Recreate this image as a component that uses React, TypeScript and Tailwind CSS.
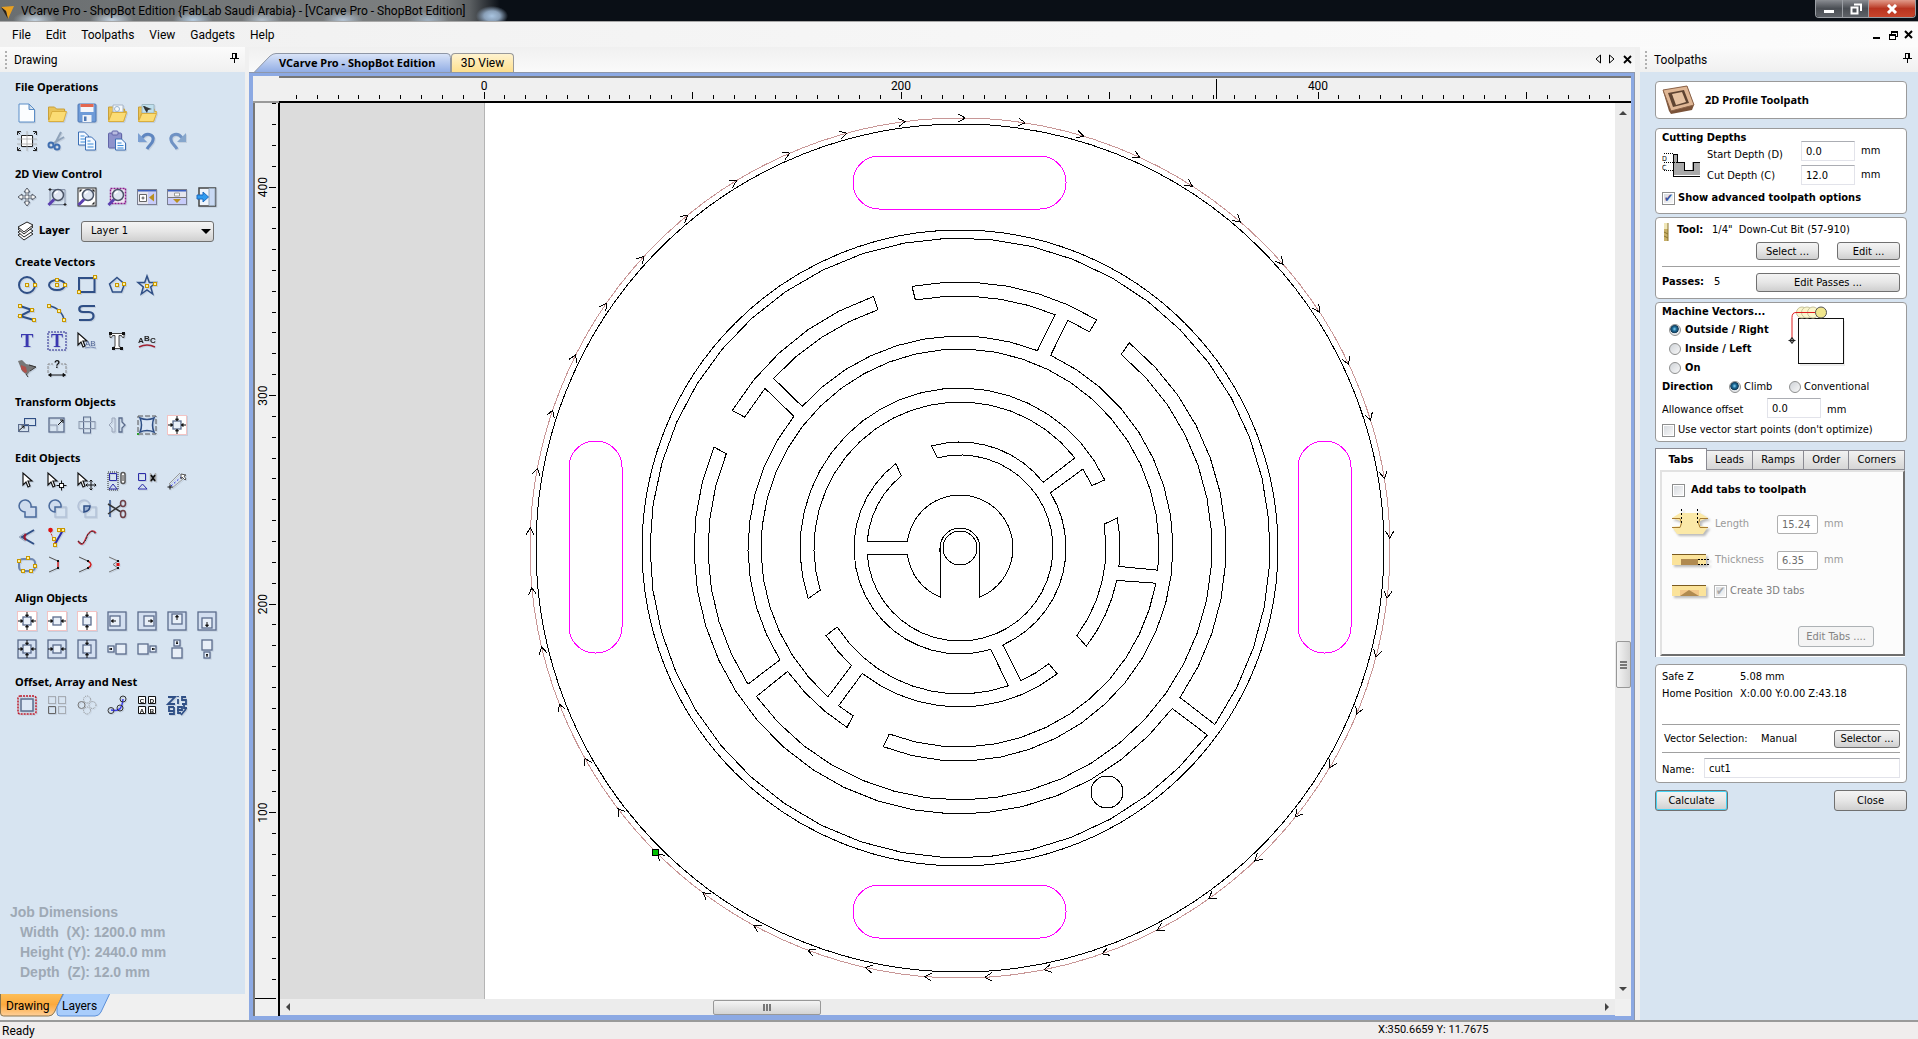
import type { ReactNode } from "react";

const menu = ["File", "Edit", "Toolpaths", "View", "Gadgets", "Help"];

const NAVY = "#2f4f86";
const STEEL = "#5b6c8c";

/* ---------- toolbox icons, all on a 20x20 grid ---------- */

const node = (x: number, y: number) => (
  <rect key={`${x}-${y}`} x={x - 1.5} y={y - 1.5} width="3" height="3" fill="#fff2a0" stroke="#c99700" strokeWidth="1" />
);

const folder = (
  <>
    <path d="M1.500 17V4h6l2 2h8v3" fill="#e9c45a" stroke="#c9a03a" />
    <path d="M1.500 18.500 5 8.500h14.500l-3 10z" fill="#fbdc74" stroke="#d9ae3e" />
  </>
);

const magnifier = (
  <>
    <circle cx="11" cy="8" r="5.500" fill="#dfe6f2" stroke="#4b5568" strokeWidth="1.500" />
    <path d="M8 7a3.500 3.500 0 0 1 3-2.500" stroke="#fff" strokeWidth="1.500" fill="none" />
    <path d="M7 12.500 1.500 18" stroke="#5a3fb0" strokeWidth="3" />
  </>
);

const cursor = (x: number) => (
  <path d={`M${x} 2v12l3-3 2 5 2-1-2-5h4z`} fill="#fff" stroke="#111" strokeWidth="1.200" />
);

const frame = <rect x="1" y="1" width="18" height="18" fill="#d3dff0" stroke={STEEL} strokeWidth="1.300" />;
const pinkFrame = <rect x=".5" y=".5" width="19" height="19" fill="#fff" stroke="#f3c4c4" />;
const box = (x: number, y: number, s = 8) => (
  <rect x={x} y={y} width={s} height={s} fill="#e8eff8" stroke={STEEL} strokeWidth="1.300" />
);
const horizArrows = <path d="M1 10h5M4 8.500v3L5.500 10zM19 10h-5M16 8.500v3L14.500 10z" stroke="#111" fill="#111" />;
const vertArrows = <path d="M10 1v5M8.500 4h3L10 5.500zM10 19v-5M8.500 16h3L10 14.500z" stroke="#111" fill="#111" />;

const icons: Record<string, ReactNode> = {
  "New file": <path d="M2 1h10l5.500 5.500V19H2zM12 1v5.500h5.500" fill="#fbfdff" stroke="#5b8ec8" />,
  "Open file": folder,
  "Save file": (
    <>
      <rect x="1" y="1" width="18" height="18" rx="1" fill="#6e9bd8" stroke="#4f78b4" />
      <path d="M3.500 1h13v8h-13z" fill="#f4f6fa" />
      <path d="M3.500 1h13v3h-13z" fill="#e4674f" />
      <path d="M5.500 12h9v7h-9z" fill="#eef2f8" />
      <path d="M7 13.500h2.500V18H7z" fill="#4f78b4" />
    </>
  ),
  "Import vectors": (
    <>
      {folder}
      <path d="M6 2h10v7H6z" fill="#f4f8fc" stroke="#a8b6c8" />
      <circle cx="10" cy="6" r="2.500" fill="none" stroke="#9ab4cf" />
      <path d="M1.500 18.500 5 9.500h14.500l-3 9z" fill="#fbdc74" stroke="#d9ae3e" />
    </>
  ),
  "Import bitmap": (
    <>
      {folder}
      <path d="M5 1.500h12V10H5z" fill="#bfe0ee" stroke="#9fb8c4" />
      <path d="M6 3c3 0 4 2 9 3l-4 1-1 3-2-3z" fill="#333" />
      <path d="M1.500 18.500 5 10.500h14.500l-3 8z" fill="#fbdc74" stroke="#d9ae3e" />
    </>
  ),
  "Job setup": (
    <>
      <path d="M4.500 4.500h11v11h-11z" fill="#fff" stroke="#222" />
      <path d="M0 8h20M0 13h20M10 0v20" stroke="#a8a8a8" strokeWidth=".8" />
      <path d="M.5 4V.5H4M.5.5 3 3M16 .5h3.500V4M19.500.5 17 3M.5 16v3.500H4M.5 19.500 3 17M16 19.500h3.500V16M19.500 19.500 17 17" fill="none" stroke="#222" />
    </>
  ),
  Cut: (
    <>
      <path d="M14 1 8 12.500M17 6 5 13" stroke="#8fa3ba" strokeWidth="2" />
      <circle cx="4" cy="14" r="2.500" fill="none" stroke="#3f6eb0" strokeWidth="2" />
      <circle cx="10" cy="16" r="2.500" fill="none" stroke="#3f6eb0" strokeWidth="2" />
    </>
  ),
  Copy: (
    <>
      <path d="M1.500 1h6l4 4v9h-10z" fill="#f4f9ff" stroke="#3b6fb5" />
      <path d="M3.500 5h4M3.500 8h6M3.500 11h6" stroke="#3b8ad8" />
      <path d="M8.500 6h6l4 4v9h-10z" fill="#f4f9ff" stroke="#3b6fb5" />
      <path d="M10.500 10h3M10.500 13h6M10.500 16h6" stroke="#3b8ad8" />
    </>
  ),
  Paste: (
    <>
      <rect x="1.500" y="2" width="13" height="15" rx="1" fill="#8e93cc" stroke="#6266a8" />
      <rect x="5" y="0" width="6" height="4" rx="1" fill="#b9bce0" stroke="#6266a8" />
      <path d="M8.500 8h6l4 4v7h-10z" fill="#f4f9ff" stroke="#3b6fb5" />
      <path d="M10.500 12h4M10.500 14.500h6M10.500 17h6" stroke="#3b8ad8" />
    </>
  ),
  Undo: (
    <>
      <path d="M5 7C9 1 17 3 16 9c-.5 4-4 5-6 9" fill="none" stroke="#5f86c0" strokeWidth="3" />
      <path d="M1 2v9h9z" fill="#7b9fd2" />
    </>
  ),
  Redo: (
    <>
      <path d="M15 7C11 1 3 3 4 9c.5 4 4 5 6 9" fill="none" stroke="#6f92c4" strokeWidth="3" />
      <path d="M19 2v9h-9z" fill="#86a6cc" />
    </>
  ),
  Pan: (
    <path
      d="M10 1l3 4h-2v4h4V7l4 3-4 3v-2h-4v4h2l-3 4-3-4h2v-4H5v2l-4-3 4-3v2h4V5H7z"
      fill="#f4f4f4"
      stroke="#555c68"
    />
  ),
  "Zoom window": (
    <>
      <path d="M3 2.500h15v15H3z" fill="none" stroke="#8a97ad" />
      <path d="M3 1v3M1.500 2.500h3M18 16v3M16.500 17.500h3" stroke="#222" />
      {magnifier}
    </>
  ),
  "Zoom to fit": (
    <>
      <rect x="1" y="1" width="18" height="18" fill="#fff" stroke="#222" />
      <path d="M2.500 2.500h3l-3 3zM17.500 2.500v3l-3-3zM17.500 17.500h-3l3-3z" fill="#222" />
      {magnifier}
    </>
  ),
  "Zoom selected": (
    <>
      <rect x="3.500" y="1.500" width="15" height="15" fill="#f0e6f5" stroke="#8b1a8b" strokeWidth="1.500" strokeDasharray="2 1" />
      {magnifier}
    </>
  ),
  "Tile side by side": (
    <>
      <rect x=".5" y="2.500" width="19" height="15" fill="#e6e6ee" stroke="#7a7f90" />
      <path d="M1 3h18v1.500H1z" fill="#3a5fc0" />
      <path d="M11 5h8v12h-8z" fill="#c8ccfa" />
      <path d="M2.500 7.500h7v7h-7z" fill="#fff" stroke="#666" />
      <path d="M4.500 11h3M6 9.500v3" stroke="#555" />
      <path d="M12 10.500l5-4v8z" fill="#b89020" />
    </>
  ),
  "Tile stacked": (
    <>
      <rect x=".5" y="2.500" width="19" height="15" fill="#e6e6ee" stroke="#7a7f90" />
      <path d="M1 3h18v1.500H1z" fill="#3a5fc0" />
      <path d="M1 11h18v6H1z" fill="#c8ccfa" />
      <path d="M1 10.500h18" stroke="#777" />
      <path d="M7.500 6h5v3h-5z" fill="#fff" stroke="#999" />
      <path d="M6 12h8l-4 4z" fill="#b89020" />
    </>
  ),
  "Switch to toolpaths": (
    <>
      <rect x="2" y="1" width="16.500" height="18" fill="#eef4fc" stroke="#444" strokeWidth="1.500" />
      <path d="M12 1.500h6v17h-6z" fill="#c9d9f4" stroke="#9ab" />
      <path d="M0 8h6V5l5.500 5L6 15v-3H0z" fill="#2f9bf0" stroke="#1c6bc0" />
    </>
  ),
  Circle: (
    <>
      <circle cx="10" cy="10" r="8" fill="none" stroke={NAVY} strokeWidth="2" />
      {node(10, 10)}
      {node(18, 10)}
    </>
  ),
  Ellipse: (
    <>
      <ellipse cx="10" cy="10" rx="8" ry="5" fill="none" stroke={NAVY} strokeWidth="2" />
      {node(10, 10)}
      {node(18, 10)}
      {node(10, 5)}
    </>
  ),
  Rectangle: (
    <>
      <rect x="2" y="3" width="15.500" height="14" fill="none" stroke={NAVY} strokeWidth="2" />
      {node(18, 2)}
      {node(2, 17)}
    </>
  ),
  Polygon: (
    <>
      <path d="M10 2.500 17.500 9l-3 8h-9l-3-8z" fill="none" stroke={NAVY} strokeWidth="1.500" />
      {node(10, 10)}
      {node(17, 9)}
    </>
  ),
  Star: (
    <>
      <path d="m10 1 2.300 6.500H19L13.700 12l2 7-5.700-4-5.700 4 2-7L1 7.500h6.700z" fill="none" stroke={NAVY} strokeWidth="1.500" />
      {node(10, 11)}
      {node(18, 9)}
    </>
  ),
  Polyline: (
    <>
      <path d="M3 3l12 4L3 13l14 4" fill="none" stroke={NAVY} strokeWidth="2" />
      {node(3, 3)}
      {node(15, 7)}
      {node(3, 13)}
      {node(17, 17)}
    </>
  ),
  Arc: (
    <>
      <path d="M2 3c8 1 14 7 15 14" fill="none" stroke={NAVY} strokeWidth="1.500" />
      {node(2, 3)}
      {node(12, 8)}
      {node(17, 17)}
    </>
  ),
  Curve: <path d="M18 3H6c-5 0-5 6 0 6h6c6 0 6 8 0 8H2" fill="none" stroke={NAVY} strokeWidth="2.200" />,
  Text: (
    <text x="10" y="16" textAnchor="middle" fontFamily="Liberation Serif, serif" fontWeight="bold" fontSize="19" fill="#3a38b0">
      T
    </text>
  ),
  "Text in box": (
    <>
      <rect x="1" y="1" width="18" height="18" fill="none" stroke="#23238a" strokeDasharray="2 1" />
      <text x="10" y="16" textAnchor="middle" fontFamily="Liberation Serif, serif" fontWeight="bold" fontSize="18" fill="#3a38b0">
        T
      </text>
    </>
  ),
  "Edit text": (
    <>
      {cursor(1)}
      <text x="8" y="15" fontFamily="Liberation Sans, sans-serif" fontSize="8" fill="#4a5f90">
        AB
      </text>
      <path d="M8 17q6-2 11 0" fill="none" stroke="#7c8fb8" />
    </>
  ),
  "Convert text": (
    <>
      <path d="M3 2.500h14v4h-1.500l-1-2H12v11l2 1v1H6v-1l2-1v-11H5.500l-1 2H3z" fill="#fff" stroke="#444" />
      <path d="M2 1h3v3H2zM15 1h3v3h-3zM5 16h3v3H5zM13 16h3v3h-3z" fill="#111" />
    </>
  ),
  "Text on curve": (
    <>
      <text x="1" y="12" fontFamily="Liberation Sans, sans-serif" fontWeight="bold" fontSize="8" fill="#222">
        A
      </text>
      <text x="7" y="10" fontFamily="Liberation Sans, sans-serif" fontWeight="bold" fontSize="8" fill="#222">
        B
      </text>
      <text x="13" y="12" fontFamily="Liberation Sans, sans-serif" fontWeight="bold" fontSize="8" fill="#222">
        C
      </text>
      <path d="M2 16q8-4 16 0" fill="none" stroke="#a02030" strokeWidth="1.500" />
    </>
  ),
  "Trace bitmap": (
    <>
      <path d="M1 2l4-1 4 4 5 1 5 2-5 3-4 5-5-4z" fill="#777" />
      <path d="M4 6l5 2 1 5-2 1-4-4z" fill="#b0504a" />
      <path d="M12 6l7 2-6 4M9 15l2 3" stroke="#333" fill="none" />
    </>
  ),
  Measure: (
    <>
      <path d="M1 14V5h5M19 14V5h-5" fill="none" stroke="#8a8a8a" strokeDasharray="3 1" />
      <path d="M2 16h16M1.500 16 4 14.500v3zM18.500 16 16 14.500v3z" stroke="#111" fill="#111" />
      <text x="10" y="9" textAnchor="middle" fontFamily="Liberation Sans, sans-serif" fontWeight="bold" fontSize="10" fill="#111">
        ?
      </text>
    </>
  ),
  Move: (
    <>
      <rect x="7.500" y="3.500" width="11" height="7" fill="none" stroke={NAVY} />
      <rect x="1.500" y="9.500" width="10" height="7" fill="none" stroke={STEEL} />
      <path d="M2 15.500 7 11M7 11v2.500M7 11H4.500" stroke="#111" fill="none" />
    </>
  ),
  Scale: (
    <>
      <rect x="2" y="3" width="15" height="14" fill="none" stroke={STEEL} strokeWidth="1.300" />
      <path d="M2 10h8v7" fill="none" stroke="#8a97ad" />
      <path d="M11 10l5-5M16 5v3M16 5h-3" stroke="#111" />
    </>
  ),
  Rotate: (
    <>
      <rect x="6.500" y="2" width="7" height="16" fill="none" stroke={STEEL} />
      <rect x="2" y="6.500" width="16" height="7" fill="none" stroke="#8a97ad" />
    </>
  ),
  Mirror: (
    <>
      <path d="M8 3v14H5v-4L2 10l3-3V3z" fill="none" stroke="#9aa5b8" />
      <path d="M12 3v14h3v-4l3-3-3-3V3z" fill="none" stroke={STEEL} strokeWidth="1.300" />
    </>
  ),
  Distort: (
    <>
      <path d="M1 1h18v18H1z" fill="none" stroke="#555" strokeDasharray="5 2" />
      <path d="M3 3q7 3 14 0-3 7 0 14-7-3-14 0 3-7 0-14z" fill="#dbe6f5" stroke={NAVY} strokeWidth="1.500" />
      <path d="M0 18h2v2H0z" fill="#2ca02c" />
    </>
  ),
  "Align in material": (
    <>
      {pinkFrame}
      {box(6, 6)}
      {horizArrows}
      {vertArrows}
    </>
  ),
  Select: cursor(6),
  "Node edit": (
    <>
      {cursor(1)}
      <path d="M14.500 9.500v10M9.500 14.500h10" stroke="#111" />
      <rect x="12.500" y="12.500" width="4" height="4" fill="#fff" stroke="#111" />
    </>
  ),
  "Transform mode": (
    <>
      {cursor(1)}
      <path d="M14 9v10M9 14h10M12.500 10.500 14 9l1.500 1.500M12.500 17.500 14 19l1.500-1.500M10.500 12.500 9 14l1.500 1.500M17.500 12.500 19 14l-1.500 1.500" stroke="#111" fill="none" />
    </>
  ),
  Group: (
    <>
      <path d="M1 1h10v18H1z" fill="none" stroke="#222" strokeDasharray="1 1" />
      <path d="M2.500 2.500h7v7h-7zM2 18l4-5 4 5z" fill="none" stroke="#2c2ca8" />
      <rect x="14" y="1.500" width="4" height="11" rx="2" fill="#fff" stroke="#555" strokeWidth="1.500" />
      <path d="M16 4v6" stroke="#333" />
    </>
  ),
  Ungroup: (
    <>
      <path d="M1.500 2.500h7v7h-7zM1 18l4.500-5 4.500 5z" fill="none" stroke="#2c2ca8" />
      <path d="M13.500 2v9M18.500 2v9" stroke="#aaa" strokeWidth="1.500" />
      <path d="M14 4l4 6M18 4l-4 6" stroke="#111" strokeWidth="1.800" />
    </>
  ),
  Dimension: (
    <>
      <path d="M2 13 13 2M5 17 16 8" stroke="#999" />
      <path d="M4 15 14 6" stroke="#2c2ce0" strokeDasharray="2 2" />
      <path d="M14 3l5 1-2 1 2 3-1 1-3-3-1 2z" fill="#fff" stroke="#555" />
      <path d="M3 13.500v5M.5 16h5" stroke="#111" />
    </>
  ),
  Weld: <path d="M8 13a6 6 0 1 1 6-5h5v10H8z" fill="#cfdcee" stroke="#4a6a9c" strokeWidth="1.500" />,
  Subtract: (
    <>
      <path d="M8 8h11v10H8z" fill="none" stroke="#b4c2d8" strokeWidth="1.500" />
      <path d="M8 13a6 6 0 1 1 6-5H8z" fill="#cfdcee" stroke="#4a6a9c" strokeWidth="1.500" />
    </>
  ),
  Overlap: (
    <>
      <circle cx="7" cy="7" r="6" fill="none" stroke="#b4c2d8" strokeWidth="1.500" />
      <path d="M8 8h11v10H8z" fill="none" stroke="#b4c2d8" strokeWidth="1.500" />
      <path d="M7 7h6q0 5-6 6z" fill="#9fb4d4" stroke={NAVY} strokeWidth="1.500" />
    </>
  ),
  Trim: (
    <>
      <path d="M3 1v17" stroke={NAVY} strokeWidth="1.500" />
      <path d="M1 5l13 8M1 15l13-9" stroke="#333" strokeWidth="1.500" />
      <ellipse cx="16" cy="4.500" rx="2.500" ry="3" fill="none" stroke="#6d3f46" strokeWidth="1.500" />
      <ellipse cx="16" cy="15" rx="2.500" ry="3.500" fill="none" stroke="#6d3f46" strokeWidth="1.500" />
    </>
  ),
  Fillet: (
    <>
      <path d="M17 3 5 10l12 7" fill="none" stroke={NAVY} strokeWidth="2" />
      <path d="M9 7q-3 3 0 6" fill="none" stroke="#a0182c" strokeWidth="2" />
      <path d="M8 6 2 10l6 4" fill="none" stroke="#9aa5b8" />
    </>
  ),
  "Insert node": (
    <>
      <path d="M8 17 16 3" stroke="#2c2ca8" strokeWidth="2" />
      <path d="M3 4l5 12" stroke="#c33" strokeDasharray="2 1" />
      <circle cx="3.500" cy="3" r="2.300" fill="#e01010" />
      {node(12, 3)}
      {node(16, 3)}
      {node(7, 12)}
      {node(8, 18)}
    </>
  ),
  "Fit curves": (
    <>
      <path d="M1 14c4 6 6 2 8-3s6-10 10-5" fill="none" stroke="#c2283a" strokeWidth="1.500" />
      <path d="M1 14l4 3 4-4 2-6 4-3 4 3" fill="none" stroke="#333" strokeDasharray="2 1" />
    </>
  ),
  "Node smoothing": (
    <>
      <rect x="2" y="4" width="16" height="12" rx="4" fill="none" stroke="#6f87b0" strokeWidth="2" />
      {node(2, 6)}
      {node(11, 3)}
      {node(18, 11)}
      {node(6, 16)}
      {node(14, 16)}
    </>
  ),
  "Join with line": (
    <>
      <path d="M2 2l9 4M2 17l9-4" stroke="#555" />
      <path d="M11 6v7" stroke="#d02020" strokeWidth="1.500" />
      <path d="M10 5h2v2h-2zM10 12h2v2h-2z" fill="#111" />
    </>
  ),
  "Join with curve": (
    <>
      <path d="M2 2l9 4M2 17l9-4" stroke="#555" />
      <path d="M11 6q6 3.500 0 7" stroke="#d02020" strokeWidth="1.500" fill="none" />
      <path d="M10 5h2v2h-2zM10 12h2v2h-2z" fill="#111" />
    </>
  ),
  "Close by moving": (
    <>
      <path d="M2 2l9 4-5 3.500L11 13l-9 4" stroke="#777" fill="none" />
      <path d="M10 5h2v2h-2zM10 12h2v2h-2z" fill="#111" />
      <path d="M9.500 8h3v3h-3z" fill="#e01010" />
    </>
  ),
  "Align center material": (
    <>
      {pinkFrame}
      {box(6, 6)}
      {horizArrows}
      {vertArrows}
    </>
  ),
  "Align horizontal material": (
    <>
      {pinkFrame}
      {box(6, 6)}
      {horizArrows}
    </>
  ),
  "Align vertical material": (
    <>
      {pinkFrame}
      {box(6, 6)}
      {vertArrows}
    </>
  ),
  "Align left inside": (
    <>
      {frame}
      {box(3, 5, 10)}
      <path d="M4 10h5M6 8.500v3L4.500 10z" stroke="#111" fill="#111" />
    </>
  ),
  "Align right inside": (
    <>
      {frame}
      {box(7, 5, 10)}
      <path d="M16 10h-5M14 8.500v3l1.500-1.500z" stroke="#111" fill="#111" />
    </>
  ),
  "Align top inside": (
    <>
      {frame}
      {box(5, 3, 10)}
      <path d="M10 4v5M8.500 6h3L10 4.500z" stroke="#111" fill="#111" />
    </>
  ),
  "Align bottom inside": (
    <>
      {frame}
      {box(5, 7, 10)}
      <path d="M10 16v-5M8.500 14h3L10 15.500z" stroke="#111" fill="#111" />
    </>
  ),
  "Align center": (
    <>
      {frame}
      {box(6, 6)}
      {horizArrows}
      {vertArrows}
    </>
  ),
  "Align horizontal": (
    <>
      {frame}
      {box(6, 6)}
      {horizArrows}
    </>
  ),
  "Align vertical": (
    <>
      {frame}
      {box(6, 6)}
      {vertArrows}
    </>
  ),
  "Align left outside": (
    <>
      {box(1, 7, 6)}
      {box(9, 5, 10)}
      <path d="M2 10h3M4 9v2l1-1z" stroke="#111" fill="#111" />
    </>
  ),
  "Align right outside": (
    <>
      {box(13, 7, 6)}
      {box(1, 5, 10)}
      <path d="M18 10h-3M16 9v2l-1-1z" stroke="#111" fill="#111" />
    </>
  ),
  "Align above outside": (
    <>
      {box(7, 1, 6)}
      {box(5, 9, 10)}
      <path d="M10 2v3M9 4h2l-1 1z" stroke="#111" fill="#111" />
    </>
  ),
  "Align below outside": (
    <>
      {box(7, 13, 6)}
      {box(5, 1, 10)}
      <path d="M10 18v-3M9 16h2l-1-1z" stroke="#111" fill="#111" />
    </>
  ),
  Offset: (
    <>
      <rect x="1" y="1" width="18" height="18" rx="2" fill="none" stroke="#c01828" strokeWidth="1.500" strokeDasharray="2 1" />
      <rect x="4" y="4" width="12" height="12" fill="#dde7f5" stroke={STEEL} strokeWidth="1.500" />
    </>
  ),
  "Array copy": (
    <>
      <path d="M1.500 1.500h7v7h-7zM11.500 1.500h7v7h-7zM11.500 11.500h7v7h-7z" fill="none" stroke="#777" strokeDasharray="1 1" />
      <path d="M1.500 11.500h7v7h-7z" fill="none" stroke="#666" />
    </>
  ),
  "Circular array": (
    <>
      <circle cx="10" cy="4.500" r="3.500" fill="none" stroke="#888" strokeDasharray="1 1" />
      <circle cx="15.500" cy="10" r="3.500" fill="none" stroke="#888" strokeDasharray="1 1" />
      <circle cx="10" cy="15.500" r="3.500" fill="none" stroke="#888" strokeDasharray="1 1" />
      <circle cx="4.500" cy="10" r="3.500" fill="none" stroke="#777" />
    </>
  ),
  "Copy along vectors": (
    <>
      <path d="M4 15c9 2 11-2 12-11" fill="none" stroke="#3a3af0" strokeWidth="1.500" />
      <circle cx="4" cy="15.500" r="3" fill="none" stroke="#333" />
      <circle cx="13" cy="13" r="3" fill="none" stroke="#333" />
      <circle cx="16" cy="4" r="3" fill="none" stroke="#333" />
    </>
  ),
  "Plate layout": (
    <>
      <path d="M1.500 1.500h7v7h-7zM11.500 1.500h7v7h-7zM1.500 11.500h7v7h-7zM11.500 11.500h7v7h-7z" fill="#fff" stroke="#111" />
      {["C", "D", "A", "B"].map((l, i) => (
        <text key={l} x={i % 2 ? 15 : 5} y={i < 2 ? 7.5 : 17.5} textAnchor="middle" fontFamily="Liberation Sans, sans-serif" fontWeight="bold" fontSize="6">
          {l}
        </text>
      ))}
    </>
  ),
  Nesting: (
    <path
      d="M1 2h7L1 9h7M11 4v5M11 1v1M19 2h-4v3h4v4h-4M7 12H2v4h5M7 12v7H2M10 15h5v-3h-4v6h3M17 9v4h3M19 14l-5 6"
      fill="none"
      stroke={NAVY}
      strokeWidth="1.800"
    />
  ),
};

const sections: { title: string; rows: string[][] }[] = [
  {
    title: "File Operations",
    rows: [
      ["New file", "Open file", "Save file", "Import vectors", "Import bitmap"],
      ["Job setup", "Cut", "Copy", "Paste", "Undo", "Redo"],
    ],
  },
  {
    title: "2D View Control",
    rows: [["Pan", "Zoom window", "Zoom to fit", "Zoom selected", "Tile side by side", "Tile stacked", "Switch to toolpaths"]],
  },
  {
    title: "Create Vectors",
    rows: [
      ["Circle", "Ellipse", "Rectangle", "Polygon", "Star"],
      ["Polyline", "Arc", "Curve"],
      ["Text", "Text in box", "Edit text", "Convert text", "Text on curve"],
      ["Trace bitmap", "Measure"],
    ],
  },
  {
    title: "Transform Objects",
    rows: [["Move", "Scale", "Rotate", "Mirror", "Distort", "Align in material"]],
  },
  {
    title: "Edit Objects",
    rows: [
      ["Select", "Node edit", "Transform mode", "Group", "Ungroup", "Dimension"],
      ["Weld", "Subtract", "Overlap", "Trim"],
      ["Fillet", "Insert node", "Fit curves"],
      ["Node smoothing", "Join with line", "Join with curve", "Close by moving"],
    ],
  },
  {
    title: "Align Objects",
    rows: [
      [
        "Align center material",
        "Align horizontal material",
        "Align vertical material",
        "Align left inside",
        "Align right inside",
        "Align top inside",
        "Align bottom inside",
      ],
      [
        "Align center",
        "Align horizontal",
        "Align vertical",
        "Align left outside",
        "Align right outside",
        "Align above outside",
        "Align below outside",
      ],
    ],
  },
  {
    title: "Offset, Array and Nest",
    rows: [["Offset", "Array copy", "Circular array", "Copy along vectors", "Plate layout", "Nesting"]],
  },
];

/* ---------- drawing geometry, in view pixels ---------- */

const CX = 680;
const CY = 445;

// wall outline as arcs around the hub: radius, start and end angle
const wall = [
  [266, 211.1, 251], [252, 251, 222.3], [212, 221.9, 291.4], [252, 292.2, 259.8], [266, 259.6, 300.9], [252, 300.9, 295.3],
  [213, 295.2, 471.1], [199, 110.8, 10.2], [160, 11.7, 37.9], [146, 36.8, -9.4], [160, -10.8, 6.6], [199, 6.4, -228.4],
  [160, 132.7, 146.8], [146, 147.3, 70.7], [106, 73.1, 232.7], [93, 230.9, 184.2], [53, 187.3, 428.1], [20, 0, -180],
  [53, 111.9, 173.1], [93, 176.1, -104], [106, 254.3, 321.7], [146, 321.9, 163.2], [160, 161.6, 334.8], [146, 334.7, 327.3],
  [106, 328.6, 426.2], [146, 65.3, 52.5], [159, 52.3, 127.9], [199, 127.6, 122.5], [212, 122.2, 144.4], [252, 143.9, -50.2],
  [266, -50.5, 34.2], [310, 34.7, -322.9], [266, 37.1, 202.3], [252, 202, 147.3], [212, 148.1, 218.4], [252, 219.3, 211.3],
];

function point(r: number, deg: number) {
  const a = (deg * Math.PI) / 180;
  return `${(CX + r * Math.cos(a)).toFixed(1)} ${(CY + r * Math.sin(a)).toFixed(1)}`;
}

const wallPath =
  "M" +
  wall
    .map(([r, from, to]) => {
      const n = Math.max(1, Math.ceil(Math.abs(to - from) / 8));
      return Array.from({ length: n + 1 }, (_, i) => point(r, from + ((to - from) * i) / n)).join("L");
    })
    .join("L") +
  "Z";

const arrows = Array.from({ length: 45 }, (_, i) => i * 8 + 0.7);

function Canvas() {
  return (
    <svg className="block h-full w-full bg-white" shapeRendering="crispEdges" fill="none" stroke="#000">
      <rect x="-1" y="-1" width="205" height="110%" fill="#dcdcdc" stroke="#b4b4b4" />
      <circle cx={CX} cy={CY} r="430" stroke="#c89696" />
      <circle cx={CX} cy={CY} r="424" />
      <circle cx={CX} cy={CY} r="318" />
      <path d={wallPath} />
      <circle cx={CX} cy={CY} r="17" />
      <circle cx="827" cy="689" r="16" />
      <g stroke="#f0f">
        <rect x="573" y="53" width="213" height="53" rx="26" />
        <rect x="573" y="782" width="213" height="53" rx="26" />
        <rect x="289" y="338" width="53" height="212" rx="26" />
        <rect x="1018" y="338" width="53" height="212" rx="26" />
      </g>
      {arrows.map((a) => (
        <path key={a} d={`M${CX - 7} ${CY - 434}l7 4l-7 4`} transform={`rotate(${a} ${CX} ${CY})`} />
      ))}
      <rect x="372" y="746" width="6" height="6" fill="#00c000" />
    </svg>
  );
}

const UNIT = 20.85;

function TopRuler() {
  return (
    <svg className="block h-full w-full" fontFamily="Roboto, sans-serif" fontSize="12">
      <g shapeRendering="crispEdges" stroke="#000">
        {Array.from({ length: 64 }, (_, i) => i - 9).map((k) => {
          const x = 205 + k * UNIT;
          return <line key={k} x1={x} x2={x} y1={k % 10 === 0 ? 14 : 17} y2="21" />;
        })}
        <line x1="937" x2="937" y1="1" y2="21" />
      </g>
      {[0, 200, 400].map((v) => (
        <text key={v} x={205 + (v / 10) * UNIT} y="12" textAnchor="middle">
          {v}
        </text>
      ))}
    </svg>
  );
}

function LeftRuler() {
  return (
    <svg className="block h-full w-full" fontFamily="Roboto, sans-serif" fontSize="12">
      <g shapeRendering="crispEdges" stroke="#000">
        {Array.from({ length: 43 }, (_, i) => i + 2).map((k) => {
          const y = 918 - k * UNIT;
          return <line key={k} y1={y} y2={y} x1={k % 10 === 0 ? 14 : 17} x2="21" />;
        })}
        <line x1="0" x2="21" y1="895" y2="895" />
      </g>
      {[100, 200, 300, 400].map((v) => {
        const y = 918 - (v / 10) * UNIT;
        return (
          <text key={v} x="12" y={y} textAnchor="middle" transform={`rotate(-90 12 ${y})`}>
            {v}
          </text>
        );
      })}
    </svg>
  );
}

/* ---------- small controls ---------- */

function PushButton({ children, className = "", disabled }: { children: ReactNode; className?: string; disabled?: boolean }) {
  return (
    <button
      disabled={disabled}
      className={`rounded-[3px] border border-[#707070] bg-linear-to-b from-[#f4f4f4] via-[#e6e6e6] to-[#cfcfcf] leading-none disabled:border-[#adb2b5] disabled:bg-none disabled:bg-[#f4f4f4] disabled:text-[#838383] ${className}`}
    >
      {children}
    </button>
  );
}

function Check({ id, checked, disabled }: { id: string; checked?: boolean; disabled?: boolean }) {
  return (
    <input
      id={id}
      type="checkbox"
      defaultChecked={checked}
      disabled={disabled}
      className="flex h-[13px] w-[13px] flex-none appearance-none items-center justify-center border border-[#8e8f8f] bg-linear-to-br from-[#d5d9de] to-[#fafafa] text-[12px] leading-none text-[#3b55a0] outline-1 -outline-offset-2 outline-white checked:before:content-['✔'] disabled:border-[#b1b1b1] disabled:text-[#a8a8a8]"
    />
  );
}

function Radio({ id, name, checked }: { id: string; name: string; checked?: boolean }) {
  return (
    <input
      id={id}
      type="radio"
      name={name}
      defaultChecked={checked}
      className="h-3 w-3 flex-none appearance-none rounded-full border border-[#8e8f8f] bg-linear-to-br from-[#cfd3d8] to-[#f8f8f8] checked:bg-[radial-gradient(circle_at_45%_40%,#8fd6f4_0,#1b6a98_25%,#123a56_48%,#e4e7ea_56%)]"
    />
  );
}

function NumberBox({ id, value, className = "", disabled }: { id: string; value: string; className?: string; disabled?: boolean }) {
  return (
    <input
      id={id}
      defaultValue={value}
      disabled={disabled}
      className={`border border-[#e2e3ea] border-t-[#abadb3] bg-white px-1 disabled:rounded-[2px] disabled:border-[#afafaf] disabled:text-[#6d6d6d] ${className}`}
    />
  );
}

function Pin() {
  return (
    <svg viewBox="0 0 9 11" className="h-[11px] w-[9px]" shapeRendering="crispEdges" fill="none" stroke="#000">
      <path d="M2.500 6V1.500h4V6M5.500 1v5M0 6.500h9M4.500 7v4" />
    </svg>
  );
}

function DockHeader({ title }: { title: string }) {
  return (
    <div className="flex h-[25px] flex-none items-center bg-linear-to-b from-[#fbfbfb] to-[#f0f0f0] pr-[6px] pl-[5px]">
      <div className="h-[18px] w-[2px] bg-[repeating-linear-gradient(to_bottom,#b0b0b0_0_2px,transparent_2px_4px)]" />
      <span className="ml-[7px] flex-1">{title}</span>
      <button aria-label={`Pin ${title}`} className="mb-1">
        <Pin />
      </button>
    </div>
  );
}

function Card({ children, className = "" }: { children: ReactNode; className?: string }) {
  return <section className={`rounded-[4px] border border-[#9a9a9a] bg-white px-[6px] ${className}`}>{children}</section>;
}

/* ---------- panels ---------- */

function TitleBar() {
  return (
    <header className="flex h-[22px] flex-none items-center border-b border-[#a8a8a8] bg-[#0a0f16] bg-[radial-gradient(ellipse_16px_10px_at_492px_16px,#a9c4e0,#8aa0b8_50%,transparent),radial-gradient(ellipse_22px_9px_at_35px_20px,#c3d2e0,transparent),radial-gradient(ellipse_22px_9px_at_112px_20px,#c3d2e0,transparent),radial-gradient(ellipse_20px_9px_at_193px_20px,#b4cbe0,transparent),radial-gradient(ellipse_20px_9px_at_262px_20px,#b0bcc8,transparent),radial-gradient(ellipse_20px_9px_at_343px_20px,#b4c4d4,transparent),radial-gradient(ellipse_20px_9px_at_428px_20px,#9fb0c0,transparent),linear-gradient(to_right,#6a6e70,#7d8081_440px,#5b5f62_470px,#0a0f16_500px)]">
      <svg viewBox="0 0 16 18" className="h-[18px] w-4">
        <path d="M1 5 14 4 8 17 6 9z" fill="#e8a020" />
        <path d="M1 5l5 4 2 8z" fill="#2a2118" />
      </svg>
      <h1 className="ml-[5px] flex-1 text-xs">
        VCarve Pro - ShopBot Edition {"{FabLab Saudi Arabia}"} - [VCarve Pro - ShopBot Edition]
      </h1>
      <div className="mr-[2px] flex h-[18px] self-start overflow-hidden rounded-b border border-t-0 border-[#9a9ea4]">
        <button aria-label="Minimize" className="flex w-[27px] items-end justify-center border-r border-[#9a9ea4] bg-linear-to-b from-[#8a8d92] via-[#4a4e54] to-[#5e6268] pb-1">
          <span className="h-[3px] w-[10px] bg-white" />
        </button>
        <button aria-label="Restore" className="flex w-[26px] items-center justify-center border-r border-[#9a9ea4] bg-linear-to-b from-[#8a8d92] via-[#4a4e54] to-[#5e6268]">
          <svg viewBox="0 0 12 12" className="h-3 w-3" fill="none" stroke="#fff" strokeWidth="2">
            <path d="M4 1.500h7V8M1.500 4.500h6v6h-6z" />
          </svg>
        </button>
        <button aria-label="Close window" className="flex w-[46px] items-center justify-center bg-linear-to-b from-[#e09a8a] via-[#b83420] to-[#c8452c]">
          <svg viewBox="0 0 12 10" className="h-[10px] w-3" stroke="#fff" strokeWidth="3">
            <path d="M2 1l8 8M10 1 2 9" />
          </svg>
        </button>
      </div>
    </header>
  );
}

function MenuBar() {
  return (
    <nav className="flex h-[25px] flex-none items-center bg-linear-to-r from-[#f0f0f0] to-[#fcfcfc] pr-1 pl-3">
      {menu.map((m) => (
        <button key={m} className="mr-[15px]">
          {m}
        </button>
      ))}
      <div className="ml-auto flex items-center gap-[6px]">
        <button aria-label="Minimize document">
          <svg viewBox="0 0 10 10" className="h-[10px] w-[10px]">
            <path d="M1 7h7v2H1z" />
          </svg>
        </button>
        <button aria-label="Restore document">
          <svg viewBox="0 0 10 10" className="h-[10px] w-[10px]" fill="none" stroke="#000" shapeRendering="crispEdges">
            <path d="M3 4V1h6v5H7M3 2h6M1 4h6v5H1zM1 5h6" />
          </svg>
        </button>
        <button aria-label="Close document">
          <svg viewBox="0 0 10 10" className="h-[10px] w-[10px]" stroke="#000" strokeWidth="2">
            <path d="M1 1l7 7M8 1 1 8" />
          </svg>
        </button>
      </div>
    </nav>
  );
}

function DrawingPanel() {
  return (
    <aside className="flex w-[245px] flex-none flex-col">
      <DockHeader title="Drawing" />
      <div className="flex flex-1 flex-col bg-[#d7e4f1] pt-[6px]">
        {sections.map((s, i) => (
          <section key={s.title} className="mb-[10px]">
            <h2 className={`pl-[15px] font-['Noto_Sans',sans-serif] text-[11px] leading-[18px] font-bold ${i === 0 ? "mb-[3px]" : ""}`}>{s.title}</h2>
            {s.rows.map((row) => (
              <div key={row[0]} className="flex h-7 items-center gap-[10px] pl-[17px]">
                {row.map((name) => (
                  <button key={name} title={name} aria-label={name}>
                    <svg viewBox="0 0 20 20" className="h-5 w-5 overflow-visible drop-shadow-[1px_1px_0_#c3cfde]">
                      {icons[name]}
                    </svg>
                  </button>
                ))}
              </div>
            ))}
            {s.title === "2D View Control" && (
              <div className="mt-2 flex h-6 items-center pl-[17px]">
                <svg viewBox="0 0 18 20" className="h-5 w-[18px]" fill="#fff" stroke="#222">
                  <path d="M1 14l6 5 9-6-6-4z" />
                  <path d="M1 11l6 5 9-6-6-4z" />
                  <path d="M1 8l6 5 9-7-6-4z" />
                  <path d="M1 6l6 5 9-7-6-3z" />
                </svg>
                <label htmlFor="layer" className="ml-1 w-[42px] font-['DejaVu_Sans_Condensed',sans-serif] text-[11px] font-bold">
                  Layer
                </label>
                <div className="relative">
                  <select
                    id="layer"
                    className="block h-[21px] w-[133px] appearance-none rounded-[3px] border border-[#707070] bg-linear-to-b from-[#f4f4f4] via-[#e6e6e6] to-[#d0d0d0] pl-[9px] font-['DejaVu_Sans_Condensed',sans-serif] text-[11px]"
                  >
                    <option>Layer 1</option>
                  </select>
                  <svg viewBox="0 0 10 5" className="pointer-events-none absolute top-2 right-[3px] h-[5px] w-[10px]">
                    <path d="M0 0h10L5 5z" />
                  </svg>
                </div>
              </div>
            )}
          </section>
        ))}
        <div className="mt-auto mb-3 pl-[10px] font-['Liberation_Sans',sans-serif] text-[14px] leading-5 font-bold whitespace-pre text-[#9ea9b5]">
          <h2>Job Dimensions</h2>
          <div className="pl-[10px]">
            <p>{"Width  (X): 1200.0 mm"}</p>
            <p>{"Height (Y): 2440.0 mm"}</p>
            <p>{"Depth  (Z): 12.0 mm"}</p>
          </div>
        </div>
      </div>
      <div className="flex h-[26px] flex-none items-start">
        <button className="relative h-[23px] w-14 pl-[6px] text-left">
          <svg viewBox="0 0 66 23" className="absolute top-0 left-0 h-[23px] w-[66px]">
            <defs>
              <linearGradient id="orange" x1="0" y1="0" x2="0" y2="1">
                <stop offset="0" stopColor="#fdc05a" />
                <stop offset="0.500" stopColor="#fba93e" />
                <stop offset="1" stopColor="#ffd09a" />
              </linearGradient>
            </defs>
            <path d="M.5-1v20q0 3 3 3h45q4 0 6-4l9-19" fill="url(#orange)" stroke="#8a7650" />
          </svg>
          <span className="relative">Drawing</span>
        </button>
        <button className="relative h-[23px] w-14 pl-[6px] text-left">
          <svg viewBox="0 0 54 23" className="absolute top-0 left-0 h-[23px] w-[54px]">
            <path d="M8-1 1 13v6q0 3 3 3h35q4 0 6-4L54-1" fill="#a9cdfb" stroke="#5b8fd8" />
          </svg>
          <span className="relative">Layers</span>
        </button>
      </div>
    </aside>
  );
}

function Scroller({ vertical }: { vertical?: boolean }) {
  if (vertical)
    return (
      <div className="flex w-4 flex-none flex-col items-center bg-[#ececec] py-1">
        <svg viewBox="0 0 8 4" className="my-1 h-1 w-2 flex-none fill-[#444]">
          <path d="M0 4h8L4 0z" />
        </svg>
        <div className="flex-[528]" />
        <div className="flex h-[47px] w-[15px] flex-none flex-col items-center justify-center gap-px rounded-[2px] border border-[#989898] bg-linear-to-r from-[#f4f4f4] to-[#d4d4d4]">
          <span className="h-[2px] w-[7px] bg-[#777]" />
          <span className="h-[2px] w-[7px] bg-[#777]" />
          <span className="h-[2px] w-[7px] bg-[#777]" />
        </div>
        <div className="flex-[298]" />
        <svg viewBox="0 0 8 4" className="my-1 h-1 w-2 flex-none fill-[#444]">
          <path d="M0 0h8L4 4z" />
        </svg>
      </div>
    );
  return (
    <div className="flex h-4 flex-1 items-center bg-[#ececec] px-[3px]">
      <svg viewBox="0 0 4 8" className="mx-[3px] h-2 w-1 flex-none fill-[#444]">
        <path d="M4 0v8L0 4z" />
      </svg>
      <div className="flex-[422]" />
      <div className="flex h-[15px] w-[108px] flex-none items-center justify-center gap-px rounded-[2px] border border-[#989898] bg-linear-to-b from-[#f4f4f4] to-[#d4d4d4]">
        <span className="h-[7px] w-[2px] bg-[#777]" />
        <span className="h-[7px] w-[2px] bg-[#777]" />
        <span className="h-[7px] w-[2px] bg-[#777]" />
      </div>
      <div className="flex-[784]" />
      <svg viewBox="0 0 4 8" className="mx-[3px] h-2 w-1 flex-none fill-[#444]">
        <path d="M0 0v8l4-4z" />
      </svg>
    </div>
  );
}

function DocumentArea() {
  return (
    <main className="mr-[5px] ml-1 flex min-w-0 flex-1 flex-col">
      <div className="flex h-[25px] flex-none items-end bg-linear-to-b from-[#f0f0f0] to-[#fafafa]">
        <button className="relative h-[19px] w-[202px] pl-[30px] text-left font-['Noto_Sans',sans-serif] text-[11px] leading-[19px] font-bold">
          <svg viewBox="0 0 202 19" className="absolute inset-0 h-[19px] w-[202px]">
            <defs>
              <linearGradient id="blue" x1="0" y1="0" x2="0" y2="1">
                <stop offset="0" stopColor="#dbe5f8" />
                <stop offset="1" stopColor="#8ca9e3" />
              </linearGradient>
            </defs>
            <path d="M5 19.500 21 3q3-2.500 6-2.500h171q3.500 0 3.500 4v16" fill="url(#blue)" stroke="#8f97a6" />
          </svg>
          <span className="relative">VCarve Pro - ShopBot Edition</span>
        </button>
        <button className="h-[19px] w-[63px] rounded-t-[4px] border border-b-0 border-[#999] bg-linear-to-b from-[#fff3cf] to-[#fedf8c] leading-[18px]">
          3D View
        </button>
        <div className="mr-[3px] mb-2 ml-auto flex items-center gap-2">
          <button aria-label="Previous document">
            <svg viewBox="0 0 6 10" className="h-[10px] w-[6px]" fill="none" stroke="#000">
              <path d="M5.500 1v8L1 5z" />
            </svg>
          </button>
          <button aria-label="Next document">
            <svg viewBox="0 0 6 10" className="h-[10px] w-[6px]" fill="none" stroke="#000">
              <path d="M.5 1v8L5 5z" />
            </svg>
          </button>
          <button aria-label="Close view">
            <svg viewBox="0 0 9 9" className="h-[9px] w-[9px]" stroke="#000" strokeWidth="1.800">
              <path d="M1 1l7 7M8 1 1 8" />
            </svg>
          </button>
        </div>
      </div>
      <div className="flex min-h-0 flex-1 flex-col border-t border-r border-[#8d97ab] bg-[#8ca9e3] pt-[3px] pr-[3px] pb-1 pl-1">
        <div className="flex h-[27px] flex-none">
          <div className="w-[26px] flex-none border-b-2 border-[#9a9a9a] bg-[#f0f0f0]" />
          <div className="min-w-0 flex-1 border-t-2 border-b-2 border-t-[#777] border-b-black bg-[#f0f0f0]">
            <TopRuler />
          </div>
        </div>
        <div className="flex min-h-0 flex-1">
          <div className="w-[27px] flex-none border-r-2 border-l-2 border-r-black border-l-[#777] bg-[#f0f0f0]">
            <LeftRuler />
          </div>
          <div className="flex min-w-0 flex-1 flex-col">
            <div className="flex min-h-0 flex-1">
              <div className="min-w-0 flex-1 overflow-hidden">
                <Canvas />
              </div>
              <Scroller vertical />
            </div>
            <div className="flex h-[17px] flex-none">
              <Scroller />
              <div className="w-4 bg-[#f0f0f0]" />
            </div>
          </div>
        </div>
      </div>
    </main>
  );
}

function CuttingDepths() {
  return (
    <Card className="mt-[9px] h-[86px]">
      <div className="flex">
        <div className="w-[139px]">
          <h3 className="pt-[1px] leading-4 font-bold">Cutting Depths</h3>
          <div className="flex">
            <svg viewBox="0 0 38 26" className="mt-[7px] h-[26px] w-[38px]" shapeRendering="crispEdges">
              <path d="M11 1h4v8h7v8h8V9h8v13H11z" fill="#a9a9a9" />
              <path d="M38 9h-7v8h-9V9h-7V1h-4v22h27" fill="none" stroke="#000" />
              <path d="M2 .5h9M2 9.500h13M2 17.500h9" stroke="#000" strokeDasharray="1 1" />
              <text x="0" y="8" fontSize="7">D</text>
              <text x="0" y="17" fontSize="7">C</text>
            </svg>
            <div className="ml-[7px] leading-[21px]">
              <label htmlFor="start" className="-mt-[2px] block">Start Depth (D)</label>
              <label htmlFor="cut" className="block">Cut Depth (C)</label>
            </div>
          </div>
        </div>
        <div className="space-y-1 pt-3">
          <div className="flex items-center">
            <NumberBox id="start" value="0.0" className="h-5 w-[54px]" />
            <span className="ml-[6px]">mm</span>
          </div>
          <div className="flex items-center">
            <NumberBox id="cut" value="12.0" className="h-5 w-[54px]" />
            <span className="ml-[6px]">mm</span>
          </div>
        </div>
      </div>
      <div className="mt-1 flex items-center gap-[3px]">
        <Check id="advanced" checked />
        <label htmlFor="advanced" className="leading-4 font-bold">Show advanced toolpath options</label>
      </div>
    </Card>
  );
}

function ToolCard() {
  return (
    <Card className="mt-[3px] h-[82px]">
      <div className="flex h-6 items-center">
        <svg viewBox="0 0 8 20" className="mt-1 h-5 w-2">
          <path d="M2 1h4v18H2z" fill="#c8b068" />
          <path d="M2 1h4v6H2z" fill="#efe6b8" />
          <path d="M2 10l4 2M2 14l4 2M6 1v18" stroke="#8a7430" />
        </svg>
        <span className="ml-[7px] w-[35px] font-bold">Tool:</span>
        <span className="whitespace-pre">{'1/4"  Down-Cut Bit (57-910)'}</span>
      </div>
      <div className="flex justify-end gap-[18px]">
        <PushButton className="h-[18px] w-[63px]">Select ...</PushButton>
        <PushButton className="h-[18px] w-[63px]">Edit ...</PushButton>
      </div>
      <hr className="mt-[6px] border-[#a0a0a0]" />
      <div className="mt-[5px] flex h-5 items-center">
        <span className="w-[52px] font-bold">Passes:</span>
        <span className="flex-1">5</span>
        <PushButton className="h-[19px] w-[144px]">Edit Passes ...</PushButton>
      </div>
    </Card>
  );
}

function MachineVectors() {
  return (
    <Card className="mt-[3px] h-[140px]">
      <div className="flex h-[75px]">
        <div className="w-[126px]">
          <h3 className="pt-px leading-4 font-bold">Machine Vectors...</h3>
          {["Outside / Right", "Inside / Left", "On"].map((l, i) => (
            <div key={l} className="flex h-[19px] items-center gap-1 pl-[7px] font-bold">
              <Radio id={`side-${i}`} name="side" checked={i === 0} />
              <label htmlFor={`side-${i}`}>{l}</label>
            </div>
          ))}
        </div>
        <svg viewBox="0 0 70 70" className="mt-[3px] h-[70px] w-[70px]">
          <rect x="12" y="15" width="45" height="45" fill="#eee" />
          <rect x="10.500" y="12.500" width="45" height="45" fill="#fff" stroke="#111" />
          {[14, 19, 25].map((x) => (
            <circle key={x} cx={x} cy="6.500" r="5.500" fill="#faf6cc" stroke="#c8c39a" />
          ))}
          <path d="M29 6.500H8q-4 0-4 5V33" fill="none" stroke="#e02020" />
          <circle cx="33" cy="6.500" r="5.500" fill="#f0e68c" stroke="#555" />
          <path d="M4 31v7M.5 34.500h7" stroke="#222" />
          <circle cx="4" cy="34.500" r="2" fill="none" stroke="#222" />
        </svg>
      </div>
      <div className="flex h-[17px] items-center">
        <span className="w-[67px] font-bold">Direction</span>
        <Radio id="climb" name="direction" checked />
        <label htmlFor="climb" className="ml-[3px] w-[45px]">Climb</label>
        <Radio id="conv" name="direction" />
        <label htmlFor="conv" className="ml-[3px]">Conventional</label>
      </div>
      <div className="mt-[3px] flex h-5 items-center">
        <label htmlFor="offset" className="w-[105px] pt-[3px]">Allowance offset</label>
        <NumberBox id="offset" value="0.0" className="h-5 w-[54px]" />
        <span className="ml-[6px] pt-[3px]">mm</span>
      </div>
      <div className="mt-1 flex items-center gap-[3px]">
        <Check id="start-points" />
        <label htmlFor="start-points" className="leading-4">Use vector start points (don't optimize)</label>
      </div>
    </Card>
  );
}

function TabSettings() {
  return (
    <section className="mt-[6px] mr-[2px]">
      <div role="tablist" className="flex h-[22px] items-end">
        <button role="tab" aria-selected="true" className="h-full w-[52px] border border-b-0 border-[#8a8a92] bg-white font-bold">
          Tabs
        </button>
        {["Leads", "Ramps", "Order", "Corners"].map((t) => (
          <button key={t} role="tab" className="h-5 flex-auto border border-l-0 border-[#8a8a92] bg-linear-to-b from-[#f2f2f2] to-[#d6d6d6]">
            {t}
          </button>
        ))}
      </div>
      <div className="h-[187px] border-l border-[#8a8a92] bg-white pl-1">
        <div className="h-[186px] border-2 border-t-[#e2e2e2] border-r-[#6e6e6e] border-b-[#6e6e6e] border-l-[#e2e2e2] bg-[#fcfcfc] pl-[10px] text-[#9a9a9a]">
          <div className="flex h-9 items-center gap-[6px] text-black">
            <Check id="add-tabs" />
            <label htmlFor="add-tabs" className="font-bold">Add tabs to toolpath</label>
          </div>
          <div className="flex h-8 items-center">
            <svg viewBox="0 0 38 32" className="h-8 w-[38px] drop-shadow-[2px_2px_1px_#bbb]">
              <path d="M0 10 8 5h20l8 5-8 3v5l8 1-5 7H5l-5-7 8-1v-5z" fill="#fbe9a8" />
              <path d="M0 10.500h8q3 5 0 9H0M36 10.500h-8q-3 5 0 9h8" fill="none" stroke="#a87c30" />
              <path d="M9.500 1v16M25.500 1v16" stroke="#000" strokeDasharray="2 2" />
            </svg>
            <label htmlFor="tab-length" className="ml-[5px] w-[62px]">Length</label>
            <NumberBox id="tab-length" value="15.24" disabled className="h-[19px] w-[41px]" />
            <span className="ml-[6px]">mm</span>
          </div>
          <div className="mt-1 flex h-8 items-center">
            <svg viewBox="0 0 38 16" className="h-4 w-[38px] drop-shadow-[2px_2px_1px_#bbb]">
              <path d="M0 2h34v11H0z" fill="#fbe39a" />
              <path d="M0 2.500h34" stroke="#7a5a20" />
              <path d="M9 7h17v6H9z" fill="#b08a50" />
              <path d="M26 7.500h12M26 12.500h12" stroke="#000" strokeDasharray="2 1" />
            </svg>
            <label htmlFor="tab-thick" className="ml-[5px] w-[62px]">Thickness</label>
            <NumberBox id="tab-thick" value="6.35" disabled className="h-[19px] w-[41px]" />
            <span className="ml-[6px]">mm</span>
          </div>
          <div className="flex h-[30px] items-center">
            <svg viewBox="0 0 38 16" className="h-4 w-[38px] drop-shadow-[2px_2px_1px_#bbb]">
              <path d="M0 2h34v11H0z" fill="#fbe39a" />
              <path d="M0 2.500h34" stroke="#7a5a20" />
              <path d="M8 7h19v6H8z" fill="#f3c88a" />
              <path d="M8 13l9-6 10 6z" fill="#b08a50" />
            </svg>
            <div className="ml-1 flex items-center gap-[3px]">
              <Check id="tabs-3d" checked disabled />
              <label htmlFor="tabs-3d" className="text-[#7d7d7d]">Create 3D tabs</label>
            </div>
          </div>
          <div className="mt-5 flex justify-end pr-[29px]">
            <PushButton disabled className="h-[21px] w-[76px]">Edit Tabs ....</PushButton>
          </div>
        </div>
      </div>
    </section>
  );
}

function ToolpathsPanel() {
  return (
    <aside className="flex w-[278px] flex-none flex-col bg-[#d7e4f1]">
      <DockHeader title="Toolpaths" />
      <form className="pt-[9px] pr-[11px] pl-[15px] font-['DejaVu_Sans_Condensed','DejaVu_Sans',sans-serif] text-[11px] leading-[14px]" onSubmit={(e) => e.preventDefault()}>
        <Card className="flex h-[38px] items-center">
          <svg viewBox="0 0 34 30" className="h-[30px] w-[34px]">
            <path d="M1 6 25 1l7 19-2 5L9 29 7 26z" fill="#7a5238" />
            <path d="M1 5 25 1l7 19-23 6z" fill="#e0b795" stroke="#8a6248" />
            <path d="M6 8l16-3 5 13-16 4z" fill="#5f4432" />
            <path d="M10 9l10-2 4 10-10 3z" fill="#e6c2a2" />
          </svg>
          <h2 className="ml-[9px] font-['Noto_Sans',sans-serif] font-bold">2D Profile Toolpath</h2>
        </Card>
        <CuttingDepths />
        <ToolCard />
        <MachineVectors />
        <TabSettings />
        <Card className="mt-[7px] h-[119px]">
          <dl className="grid grid-cols-[78px_1fr] pt-[3px] leading-[17px]">
            <dt>Safe Z</dt>
            <dd>5.08 mm</dd>
            <dt>Home Position</dt>
            <dd>X:0.00 Y:0.00 Z:43.18</dd>
          </dl>
          <hr className="mt-[22px] border-[#a0a0a0]" />
          <div className="flex h-[27px] items-center pl-[2px]">
            <span className="w-[97px]">Vector Selection:</span>
            <span className="flex-1">Manual</span>
            <PushButton className="h-[18px] w-[66px]">Selector ...</PushButton>
          </div>
          <hr className="border-[#a0a0a0]" />
          <div className="mt-[5px] flex items-center">
            <label htmlFor="name" className="w-[42px] pt-1">Name:</label>
            <NumberBox id="name" value="cut1" className="h-5 min-w-0 flex-1" />
          </div>
        </Card>
        <div className="mt-[7px] flex justify-between">
          <PushButton className="h-[21px] w-[73px] border-[#3c7fb1] ring-1 ring-[#46d2f4] ring-inset">Calculate</PushButton>
          <PushButton className="h-[21px] w-[73px]">Close</PushButton>
        </div>
      </form>
    </aside>
  );
}

export default function App() {
  return (
    <div className="flex h-screen flex-col overflow-hidden bg-[#f0f0f0] font-[Roboto,sans-serif] text-xs text-black">
      <TitleBar />
      <MenuBar />
      <div className="flex min-h-0 flex-1">
        <DrawingPanel />
        <DocumentArea />
        <ToolpathsPanel />
      </div>
      <footer className="flex h-[19px] flex-none items-center border-t-2 border-[#9a9a9a] bg-[#f0eded] pl-[2px]">
        <span className="flex-1">Ready</span>
        <span className="w-[540px] text-[11px]">X:350.6659 Y: 11.7675</span>
      </footer>
    </div>
  );
}
